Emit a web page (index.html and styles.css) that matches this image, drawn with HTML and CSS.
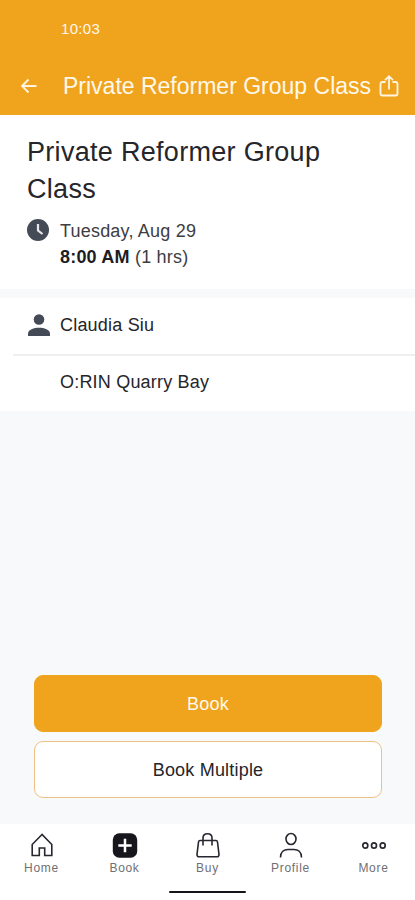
FILE: index.html
```html
<!DOCTYPE html>
<html lang="en">
<head>
<meta charset="utf-8">
<meta name="viewport" content="width=device-width, initial-scale=1">
<title>Private Reformer Group Class</title>
<link rel="stylesheet" href="styles.css">
</head>
<body>
<div class="app">
  <header class="header">
    <div class="status"><span class="time">10:03</span></div>
    <div class="bar">
      <svg class="back" viewBox="0 0 18 18"><path d="M16.500 9H2M8.500 2.500L2 9l6.500 6.500"/></svg>
      <span class="bar-title">Private Reformer Group Class</span>
      <svg class="share" viewBox="0 0 20 24"><path d="M6.500 8H3.500Q1.500 8 1.500 10V19.500Q1.500 21.500 3.500 21.500H16.500Q18.500 21.500 18.500 19.500V10Q18.500 8 16.500 8H13.500M10 15.500V2.500M6 6.200L10 2.200l4 4"/></svg>
    </div>
  </header>
  <main class="main">
    <section class="summary">
      <h1 class="title">Private Reformer Group Class</h1>
      <div class="row">
        <svg class="clock" viewBox="0 0 22 22"><circle cx="11" cy="11" r="11" fill="#454a57"/><path d="M11 5V11.500L15.500 15" fill="none" stroke="#e8e9ed" stroke-width="2.200"/></svg>
        <div class="when"><div><span class="date">Tuesday, Aug 29</span></div><div><span class="hours"><b>8:00 AM</b> (1 hrs)</span></div></div>
      </div>
    </section>
    <section class="details">
      <div class="detail">
        <svg class="person" viewBox="0 0 22 22"><circle cx="11" cy="5.500" r="5.300"/><path d="M0 22V19.500C0 15.500 6 13.700 11 13.700S22 15.500 22 19.500V22Z"/></svg>
        <span class="teacher">Claudia Siu</span>
      </div>
      <div class="detail place"><span class="location">O:RIN Quarry Bay</span></div>
    </section>
    <div class="actions">
      <button class="btn primary"><span class="book">Book</span></button>
      <button class="btn secondary"><span class="multiple">Book Multiple</span></button>
    </div>
  </main>
  <nav class="nav">
    <a class="tab"><svg viewBox="0 0 28 28"><path d="M14 3.500L4.200 13.500V24.500H11.300V17H16.700V24.500H23.800V13.500Z"/></svg><span class="label">Home</span></a>
    <a class="tab"><svg viewBox="0 0 28 28"><rect x="1.800" y="2.300" width="24.400" height="24.400" rx="6.500" fill="#16161c" stroke="none"/><path class="plus" d="M14 7.800V21.200M7.300 14.500H20.700"/></svg><span class="label">Book</span></a>
    <a class="tab"><svg viewBox="0 0 28 28"><path d="M6 9.500H22Q23.300 9.500 23.500 11L25 23.500Q25 25.800 23 25.800H5Q3 25.800 3 23.500L4.500 11Q4.700 9.500 6 9.500ZM9 14.500V7Q9 2.700 13.500 2.700T18 7V14.500"/></svg><span class="label">Buy</span></a>
    <a class="tab"><svg viewBox="0 0 28 28"><ellipse cx="14" cy="8" rx="5" ry="5.500"/><path d="M3.500 26.500C3.500 21 7 18.500 11 18.500H17C21 18.500 24.500 21 24.500 26.500"/></svg><span class="label">Profile</span></a>
    <a class="tab"><svg class="dots" viewBox="0 0 28 28"><ellipse cx="5.300" cy="14.500" rx="2.500" ry="2.700"/><ellipse cx="14" cy="14.500" rx="2.500" ry="2.700"/><ellipse cx="22.700" cy="14.500" rx="2.500" ry="2.700"/></svg><span class="label">More</span></a>
  </nav>
  <div class="home-area"><div class="indicator"></div></div>
</div>
</body>
</html>
```
FILE: styles.css
```css
* { box-sizing: border-box; }
body { margin: 0; font-family: "Liberation Sans", Arial, sans-serif; color: #25252a; }
.app { width: 415px; height: 900px; display: flex; flex-direction: column; background: #f8f9fb; overflow: hidden; }
svg { display: block; flex: none; }
span { white-space: nowrap; }

.header { height: 115px; background: #f0a41e; color: #fff8ec; }
.status { height: 57px; padding: 19px 0 0 61px; font-size: 15px; line-height: 20px; letter-spacing: .3px; }
.bar { height: 58px; display: flex; align-items: center; }
.back { width: 18px; height: 18px; margin-left: 20px; }
.back path, .share path { fill: none; stroke: #fff5e2; stroke-width: 1.8; }
.bar-title { width: 308px; margin-left: 25px; font-size: 23px; line-height: 30px; }
.share { width: 20px; height: 24px; margin-left: 8px; }

.main { flex: 1; display: flex; flex-direction: column; }
.summary { height: 174px; padding: 19px 27px 0; background: #fff; }
.title { margin: 0; width: 320px; font-size: 27px; font-weight: 400; line-height: 37px; letter-spacing: .3px; }
.row { display: flex; margin-top: 11px; }
.clock { width: 22px; height: 22px; }
.when { margin-left: 11px; font-size: 18px; line-height: 25.500px; letter-spacing: .2px; color: #3d3d42; }
.when b { color: #1d1d22; }
.details { margin-top: 9px; background: #fff; height: 113px; }
.detail { height: 58px; display: flex; align-items: center; padding: 0 0 2px 15px; margin-left: 13px; border-bottom: 2px solid #efeff1; font-size: 18px; line-height: 24px; letter-spacing: .2px; }
.person { width: 22px; height: 22px; fill: #454a57; }
.teacher { margin: -1px 0 0 10px; }
.place { height: 52px; padding: 0 0 0 47px; border: 0; }

.actions { margin-top: auto; padding: 0 33px 26px 34px; display: flex; flex-direction: column; gap: 9px; }
.btn { height: 57px; padding: 0; border: 1px solid #efc083; border-radius: 9px; font: 18px/24px "Liberation Sans", Arial, sans-serif; letter-spacing: .2px; }
.primary { background: #f0a41e; border-color: #f0a41e; color: #fff8ec; }
.secondary { background: #fff; color: #25252a; }

.nav { height: 56px; display: grid; grid-template-columns: repeat(5, 1fr); padding-top: 7px; background: #fff; }
.tab { display: flex; flex-direction: column; align-items: center; }
.tab svg { width: 28px; height: 28px; fill: none; stroke: #27272f; stroke-width: 1.6; }
.tab .plus { stroke: #fff; stroke-width: 2.5; }
.tab .dots { stroke-width: 1.7; }
.label { font-size: 12px; line-height: 16px; letter-spacing: .7px; color: #707074; margin-top: 1px; }
.home-area { height: 20px; padding-top: 11px; background: #fff; }
.indicator { width: 77px; height: 2px; margin: 0 auto; border-radius: 1px; background: #16161a; }
```
